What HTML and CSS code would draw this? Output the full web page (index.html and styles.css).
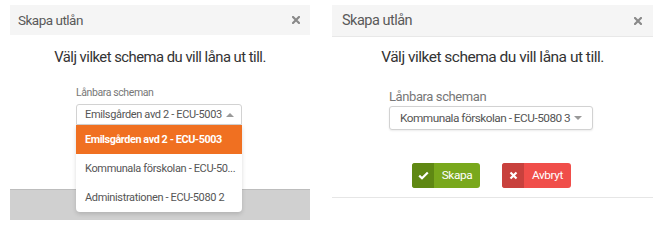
FILE: index.html
```html
<!DOCTYPE html>
<html lang="sv">
<head>
<meta charset="utf-8">
<title>Skapa utlån</title>
<link rel="stylesheet" href="styles.css">
</head>
<body>
<div class="page">
  <section class="modal modal-left">
    <header class="modal-head">
      <span class="modal-title">Skapa utlån</span>
      <svg class="close" width="8" height="8" viewBox="0 0 8 8"><path d="M1 1L7 7M7 1L1 7" stroke="#8a8a8a" stroke-width="2.2" stroke-linecap="square"/></svg>
    </header>
    <div class="modal-body">
      <h1 class="lead">Välj vilket schema du vill låna ut till.</h1>
      <div class="field">
        <div class="label">Lånbara scheman</div>
        <div class="select open">
          <span class="select-text">Emilsgården avd 2 - ECU-5003</span>
          <span class="caret up"></span>
          <ul class="dropdown">
            <li class="opt active">Emilsgården avd 2 - ECU-5003</li>
            <li class="opt">Kommunala förskolan - ECU-50...</li>
            <li class="opt">Administrationen - ECU-5080 2</li>
          </ul>
        </div>
      </div>
    </div>
    <div class="modal-foot"></div>
  </section>

  <section class="modal modal-right">
    <header class="modal-head">
      <span class="modal-title">Skapa utlån</span>
      <svg class="close" width="8" height="8" viewBox="0 0 8 8"><path d="M1 1L7 7M7 1L1 7" stroke="#8a8a8a" stroke-width="2.2" stroke-linecap="square"/></svg>
    </header>
    <div class="modal-body">
      <h1 class="lead">Välj vilket schema du vill låna ut till.</h1>
      <div class="field">
        <div class="label">Lånbara scheman</div>
        <div class="select">
          <span class="select-text">Kommunala förskolan - ECU-5080 3</span>
          <span class="caret"></span>
        </div>
      </div>
      <div class="actions">
        <button class="btn btn-ok">
          <span class="btn-icon"><svg width="11" height="9" viewBox="0 0 11 9"><path d="M1.2 4.6L4 7.3L9.8 1.5" fill="none" stroke="#fff" stroke-width="2.2"/></svg></span>
          <span class="btn-label">Skapa</span>
        </button>
        <button class="btn btn-cancel">
          <span class="btn-icon"><svg width="9" height="9" viewBox="0 0 9 9"><path d="M1.5 1.5L7.5 7.5M7.5 1.5L1.5 7.5" stroke="#fff" stroke-width="2.2"/></svg></span>
          <span class="btn-label">Avbryt</span>
        </button>
      </div>
    </div>
  </section>
</div>
</body>
</html>
```

FILE: styles.css
```css
* { box-sizing: border-box; }
html, body { margin: 0; padding: 0; background: #fff; }
body { font-family: Roboto, "Liberation Sans", Arial, sans-serif; color: #333; }

.page {
  display: flex;
  align-items: flex-start;
  padding-top: 5px;
  padding-left: 10px;
  gap: 22px;
  height: 229px;
  overflow: hidden;
}

.modal { background: #fff; display: flex; flex-direction: column; }
.modal-left { width: 300px; }
.modal-right { flex: 1; }

.modal-head {
  background: #f5f5f5;
  display: flex;
  align-items: center;
  justify-content: space-between;
  color: #5a5a5a;
  letter-spacing: -0.5px;
}
.modal-left .modal-head { height: 30px; padding: 0 10px 0 8px; font-size: 13.5px; }
.modal-right .modal-head { height: 32px; padding: 0 11px 0 10px; font-size: 14.5px; border-bottom: 1px solid #e8e8e8; }
.close { display: block; }

.modal-body { position: relative; }
.modal-left .modal-body { height: 154px; }

.lead {
  margin: 0;
  font-weight: 400;
  text-align: center;
  color: #333;
  letter-spacing: -0.5px;
}
.modal-left .lead { font-size: 14.8px; line-height: 18px; margin-top: 13px; }
.modal-right .lead { font-size: 15.5px; line-height: 18px; margin-top: 11px; }

.label { color: #777; letter-spacing: -0.4px; }
.modal-left .field { margin: 20px 0 0 66px; width: 166px; }
.modal-left .label { font-size: 10.5px; line-height: 14px; margin-bottom: 4px; }
.modal-right .field { margin: 24px 0 0 57px; width: 204px; }
.modal-right .label { font-size: 13px; line-height: 14px; margin-bottom: 2px; }

.select {
  position: relative;
  display: flex;
  align-items: center;
  justify-content: space-between;
  border: 1px solid #d2d2d2;
  border-radius: 3px;
  background: #fff;
  color: #555;
}
.modal-left .select { height: 21px; padding: 0 7px 0 8px; font-size: 11px; letter-spacing: -0.35px; border-radius: 3px 3px 0 0; }
.modal-right .select { height: 24px; padding: 0 10px 0 10px; font-size: 11.8px; letter-spacing: -0.5px; box-shadow: 0 1px 2px rgba(0,0,0,0.08); }

.caret {
  width: 0; height: 0;
  border-left: 4px solid transparent;
  border-right: 4px solid transparent;
  border-top: 4px solid #999;
}
.caret.up { border-top: 0; border-bottom: 4px solid #999; }

.dropdown {
  position: absolute;
  left: -1px; right: -1px; top: 20px;
  margin: 0; padding: 0;
  list-style: none;
  background: #fff;
  border-radius: 0 0 4px 4px;
  box-shadow: 0 2px 4px rgba(0,0,0,0.15);
  z-index: 5;
  letter-spacing: -0.35px;
}
.opt {
  height: 29px;
  line-height: 29px;
  padding-left: 9px;
  font-size: 11px;
  color: #555;
  white-space: nowrap;
}
.opt.active { background: #f07021; color: #fff; font-weight: 700; font-size: 10.8px; letter-spacing: -0.4px; }

.modal-foot {
  height: 31px;
  background: #d0d0d0;
  border-top: 1px solid #bdbdbd;
}

.actions {
  display: flex;
  justify-content: center;
  gap: 22px;
  margin-top: 33px;
  padding-right: 2px;
  padding-bottom: 9px;
  border-bottom: 1px solid #e6e6e6;
}
.btn {
  display: flex;
  align-items: stretch;
  height: 25px;
  padding: 0;
  border: 0;
  border-radius: 3px;
  overflow: hidden;
  color: #fff;
  font-family: inherit;
  font-size: 11.8px;
  letter-spacing: -0.4px;
  font-weight: 400;
  cursor: pointer;
}
.btn-icon { width: 22px; display: flex; align-items: center; justify-content: center; }
.btn-label { display: flex; align-items: center; justify-content: center; padding-bottom: 2px; }
.btn-ok { width: 68px; background: #79a81c; }
.btn-ok .btn-icon { background: #5f8813; }
.btn-ok .btn-label { width: 46px; }
.btn-cancel { width: 69px; background: #f04e4a; }
.btn-cancel .btn-icon { background: #c8413d; }
.btn-cancel .btn-label { width: 47px; }
```
